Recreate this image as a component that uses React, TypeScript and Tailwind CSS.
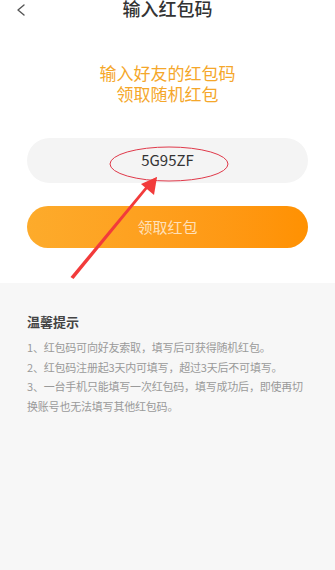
import React from "react";

const font = { fontFamily: '"Noto Sans CJK SC", "Noto Sans", sans-serif' };

export default function App() {
  return (
    <div
      className="relative w-[335px] h-[570px] bg-[#f7f7f7] overflow-hidden"
      style={font}
    >
      <div className="bg-white">
        {/* header */}
        <div className="relative h-[20px] flex items-start justify-center">
          <svg
            className="absolute left-[15px] top-[4px]"
            width="11"
            height="12"
            viewBox="0 0 11 12"
          >
            <path
              d="M9 1 L3 6 L9 11"
              fill="none"
              stroke="#555"
              strokeWidth="1.4"
              strokeLinecap="round"
              strokeLinejoin="round"
            />
          </svg>
          <div className="text-[18px] leading-[18px] text-[#333] font-medium mt-[-1px]">
            输入红包码
          </div>
        </div>

        {/* subtitle */}
        <div className="mt-[42px] flex flex-col items-center text-[17px] leading-[21px] text-[#f5a72a]">
          <div>输入好友的红包码</div>
          <div>领取随机红包</div>
        </div>

        <div className="px-[27px] pt-[34px] pb-[35px]">
          <div className="h-[45px] rounded-full bg-[#f4f4f4] flex items-center justify-center text-[15px] text-[#333]">
            5G95ZF
          </div>
          <button className="mt-[23px] w-full h-[42px] rounded-full bg-gradient-to-r from-[#fdab2b] to-[#ff9102] flex items-center justify-center text-[15px] text-white/70">
            领取红包
          </button>
        </div>
      </div>

      {/* tips */}
      <div className="px-[27px] pt-[31px]">
        <div className="text-[13px] leading-[16px] font-bold text-[#444]">
          温馨提示
        </div>
        <div className="mt-[8px] text-[11px] leading-[19.5px] tracking-[-0.2px] text-[#9a9a9a]">
          <div>1、红包码可向好友索取，填写后可获得随机红包。</div>
          <div>2、红包码注册起3天内可填写，超过3天后不可填写。</div>
          <div>3、一台手机只能填写一次红包码，填写成功后，即使再切换账号也无法填写其他红包码。</div>
        </div>
      </div>

      {/* annotation overlay */}
      <svg
        className="absolute left-0 top-0 pointer-events-none"
        width="335"
        height="570"
        viewBox="0 0 335 570"
      >
        <ellipse
          cx="169"
          cy="164"
          rx="59"
          ry="17"
          fill="none"
          stroke="#e0394a"
          strokeWidth="1"
        />
        <polygon
          points="72,278 73.5,279 148,188 151,190 157,177 145,183 147,185 70.5,277"
          fill="#f23b3b"
        />
        <polygon points="157,177 141,184 154,195" fill="#f23b3b" />
      </svg>
    </div>
  );
}
